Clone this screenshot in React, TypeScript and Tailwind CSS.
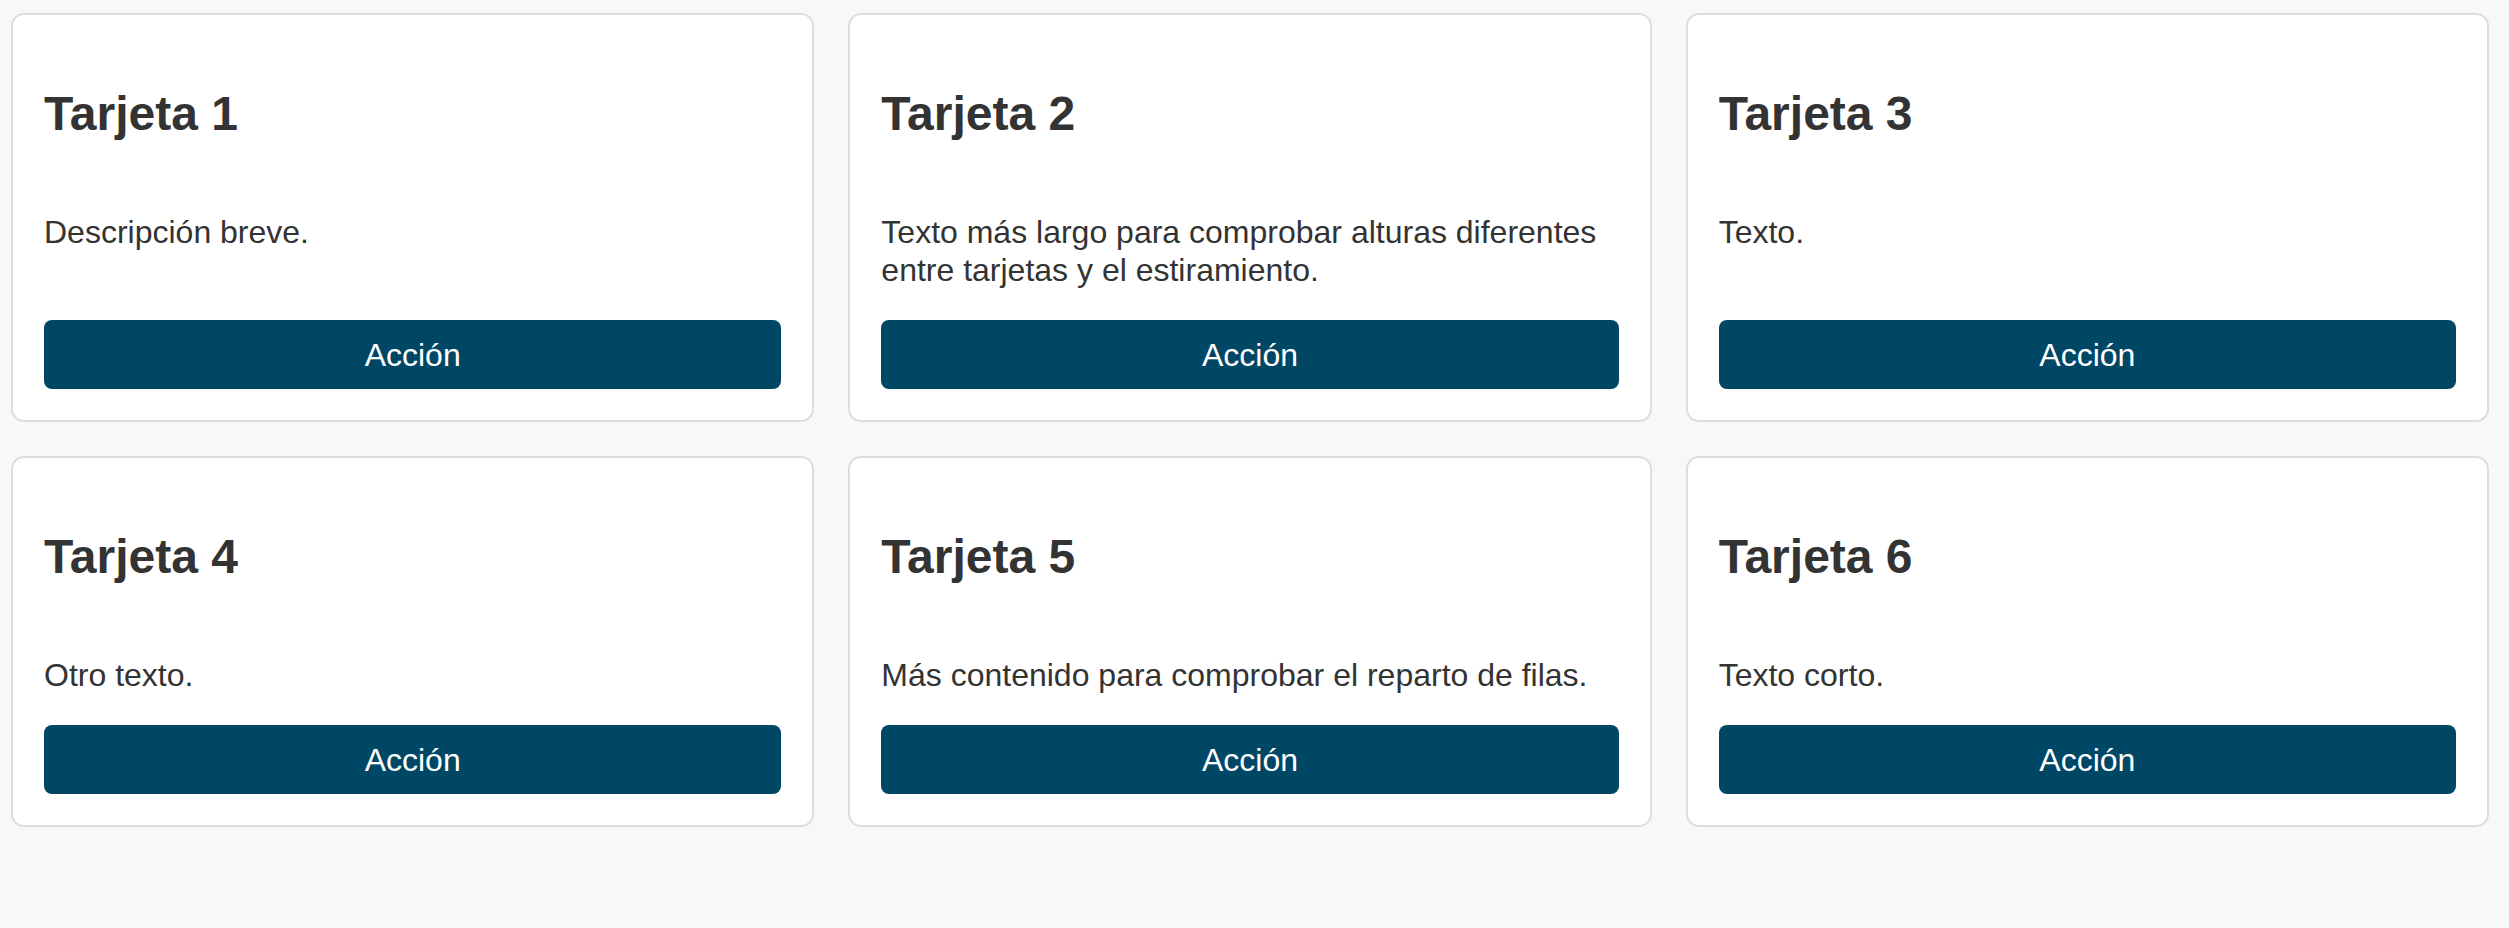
import React from "react";

interface Card {
  title: string;
  text: string;
}

const cards: Card[] = [
  { title: "Tarjeta 1", text: "Descripción breve." },
  { title: "Tarjeta 2", text: "Texto más largo para comprobar alturas diferentes entre tarjetas y el estiramiento." },
  { title: "Tarjeta 3", text: "Texto." },
  { title: "Tarjeta 4", text: "Otro texto." },
  { title: "Tarjeta 5", text: "Más contenido para comprobar el reparto de filas." },
  { title: "Tarjeta 6", text: "Texto corto." },
];

const App: React.FC = () => {
  return (
    <div className="min-h-screen bg-[#f8f8f8] pt-[13px] pl-[11px] pr-[20px] font-['Liberation_Sans',Arial,sans-serif] text-[#333333]">
      <div className="grid grid-cols-3 gap-[34px]">
        {cards.map((card) => (
          <div key={card.title} className="flex flex-col rounded-[13px] border-2 border-[#dddddd] bg-white px-[31px] pb-[31px] pt-[31px]">
            <h2 className="mt-[39px] mb-[38px] text-[48px] font-bold leading-[1.2]">{card.title}</h2>
            <p className="mt-[32px] mb-[31px] flex-1 text-[32px] leading-[1.2]">{card.text}</p>
            <button type="button" className="h-[69px] w-full rounded-[8px] bg-[#004766] text-[32px] leading-[1.2] text-white">
              Acción
            </button>
          </div>
        ))}
      </div>
    </div>
  );
};

export default App;
